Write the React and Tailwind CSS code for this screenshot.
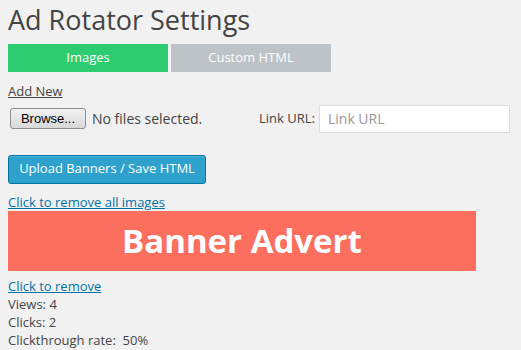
import React from "react";

export default function App() {
  return (
    <div className="min-h-[350px] bg-[#f1f1f1] px-2 pt-1 text-[13px] text-[#444] font-['Open_Sans',sans-serif]">
      <h1 className="text-[27px] leading-[32px] font-medium text-[#444]">Ad Rotator Settings</h1>

      <div className="mt-[8px] flex gap-[3px]">
        <div className="w-[160px] h-[28px] bg-[#2ecc71] text-white flex items-center justify-center">Images</div>
        <div className="w-[160px] h-[28px] bg-[#bdc3c7] text-white flex items-center justify-center">Custom HTML</div>
      </div>

      <div className="mt-[10px]">
        <a className="underline text-[#444]">Add New</a>
      </div>

      <div className="flex items-center mt-[2px] h-[30px]">
        <div className="flex items-center w-[250px]">
          <button
            type="button"
            className="ml-[2px] w-[76px] h-[21px] border border-[#8d8d8d] rounded-[3px] bg-gradient-to-b from-[#f2f2f2] to-[#d8d8d8] text-[13px] text-black font-['Liberation_Sans',sans-serif]"
          >
            Browse...
          </button>
          <span className="ml-[6px] text-[14px] text-[#444]">No files selected.</span>
        </div>
        <span className="ml-[1px] text-[13px] text-[#444]">Link URL:</span>
        <input
          placeholder="Link URL"
          className="ml-[4px] w-[191px] h-[28px] border border-[#ddd] bg-white px-[8px] text-[14px] placeholder:text-[#999] outline-none"
        />
      </div>

      <button
        type="button"
        className="mt-[21px] h-[29px] w-[198px] rounded-[3px] border border-[#0074a2] bg-[#2ea2cc] text-white text-[13px] shadow-[inset_0_1px_0_rgba(120,200,230,0.5)]"
      >
        Upload Banners / Save HTML
      </button>

      <div className="mt-[10px] leading-[16px]">
        <a className="underline text-[#0073aa]">Click to remove all images</a>
      </div>

      <div className="mt-[1px] w-[468px] h-[60px] bg-[#fc6e5d] flex items-center justify-center">
        <span className="text-white font-bold text-[33px] leading-none">Banner Advert</span>
      </div>

      <div className="mt-[6px] leading-[18px]">
        <a className="underline text-[#0073aa]">Click to remove</a>
        <div>Views: 4</div>
        <div>Clicks: 2</div>
        <div>Clickthrough rate:&nbsp; 50%</div>
      </div>
    </div>
  );
}
